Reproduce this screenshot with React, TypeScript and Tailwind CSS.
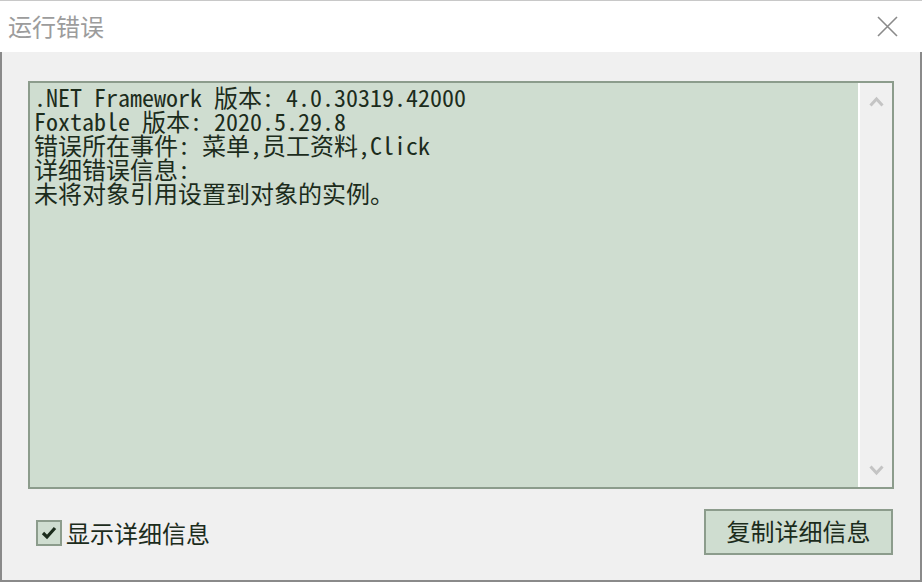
const lines = [
  '.NET Framework 版本: 4.0.30319.42000',
  'Foxtable 版本: 2020.5.29.8',
  '错误所在事件: 菜单,员工资料,Click',
  '详细错误信息:',
  '未将对象引用设置到对象的实例。',
];

const mono = "font-['Noto_Sans_Mono_CJK_SC','Liberation_Mono','Noto_Sans_CJK_SC',monospace]";
const cjk = "font-['Noto_Sans_CJK_SC','Noto_Sans',sans-serif]";

function Chevron({ down }: { down?: boolean }) {
  return (
    <svg width="15" height="11" viewBox="0 0 15 11" className={down ? 'rotate-180' : ''}>
      <path d="M1.5 9.5 L7.5 3 L13.5 9.5" fill="none" stroke="#c4c4c4" strokeWidth="3" />
    </svg>
  );
}

export default function App() {
  return (
    <div className="w-[922px] h-[582px] flex flex-col bg-[#f0f0f0] overflow-hidden">
      <div className="h-[52px] shrink-0 bg-white border-t border-[#c8c8c8] flex items-center justify-between pl-[8px] pr-[24px]">
        <span className={`${cjk} text-[24px] leading-none text-[#9c9c9c] -mt-[1px]`}>运行错误</span>
        <svg width="21" height="21" viewBox="0 0 21 21" className="-mt-[1px]">
          <path d="M1 1 L20 20 M20 1 L1 20" stroke="#8a8a8a" strokeWidth="1.6" />
        </svg>
      </div>

      <div className="flex-1 flex flex-col border-x-2 border-b-2 border-[#8a8a8a] pt-[29px] pl-[26px] pr-[26px]">
        <div className="h-[408px] flex border-2 border-[#8c9c8c] bg-[#cfddd0]">
          <div className={`${mono} flex-1 pl-[4px] pt-[2px] text-[24px] leading-[24px] text-[#1c2c1c] whitespace-pre`}>
            {lines.map((l, i) => (
              <div key={i}>{l}</div>
            ))}
          </div>
          <div className="w-[34px] border-l-2 border-white bg-[#f0f0f0] flex flex-col items-center justify-between pt-[13px] pb-[11px] pl-[1px]">
            <Chevron />
            <Chevron down />
          </div>
        </div>

        <div className="flex items-center justify-between mt-[20px] pl-[8px] pr-[1px]">
          <label className="flex items-center gap-[4px] mt-[1px]">
            <span className="w-[26px] h-[26px] border-2 border-[#8c9c8c] bg-[#cfddd0] flex items-center justify-center">
              <svg width="16" height="14" viewBox="0 0 16 14">
                <path d="M2 7 L6 11 L14 2" fill="none" stroke="#1c2c1c" strokeWidth="3.2" />
              </svg>
            </span>
            <span className={`${cjk} text-[24px] leading-none text-[#1c2c1c]`}>显示详细信息</span>
          </label>
          <button className={`${cjk} w-[189px] h-[46px] border-2 border-[#8c9c8c] bg-[#cfddd0] text-[24px] leading-none text-[#1c2c1c] pb-[2px]`}>
            复制详细信息
          </button>
        </div>
      </div>
    </div>
  );
}
